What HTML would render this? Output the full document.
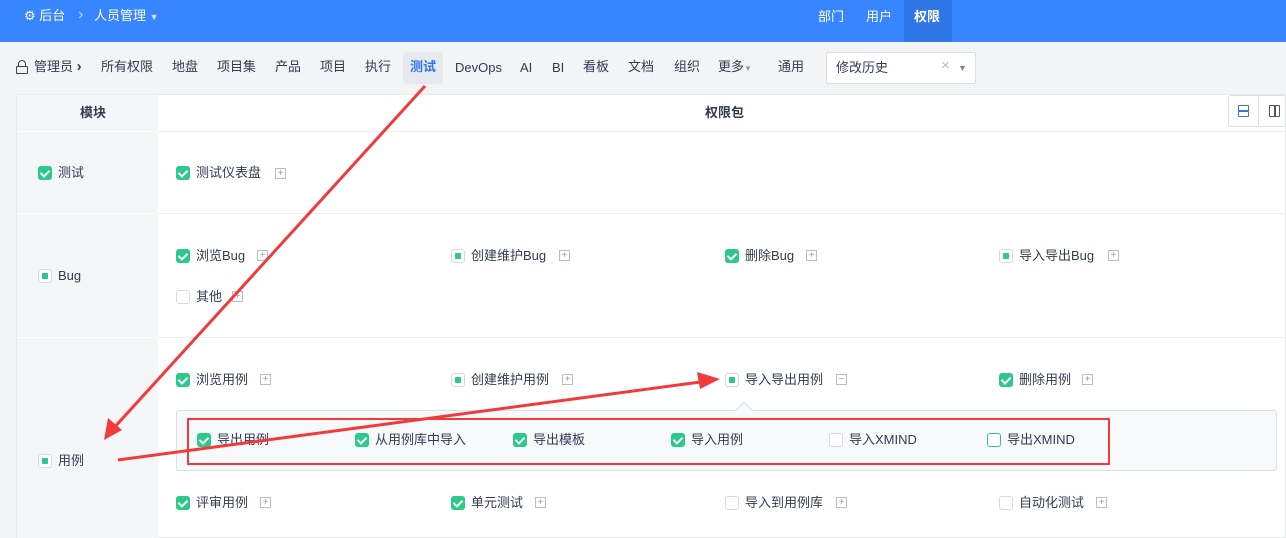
<!DOCTYPE html>
<html><head><meta charset="utf-8"><style>
*{margin:0;padding:0;box-sizing:border-box}
body{width:1286px;height:538px;overflow:hidden;background:#f3f4f6;font-family:"Liberation Sans","Noto Sans CJK SC",sans-serif;font-size:13px;color:#313c52;position:relative}
.a{position:absolute;white-space:nowrap;line-height:16px}
.top{position:absolute;left:0;top:0;width:1286px;height:42px;background:#3785ff;color:#fff}
.cb{position:absolute;width:14px;height:14px;border-radius:3px;background:#2bc98a}
.cb:after{content:"";position:absolute;left:4px;top:1.5px;width:4px;height:7px;border:solid #fff;border-width:0 2px 2px 0;transform:rotate(45deg)}
.pb{position:absolute;width:14px;height:14px;border-radius:3px;border:1px solid #d5d9e0;background:#fff}
.pb:after{content:"";position:absolute;left:3px;top:3px;width:6px;height:6px;background:#2bc98a;border-radius:1px}
.eb{position:absolute;width:14px;height:14px;border-radius:3px;border:1px solid #d5d9e0;background:#fff}
.pl{position:absolute;width:11px;height:11px;border:1px solid #b8bdc8;color:#9aa0ab;font-size:10px;line-height:9px;text-align:center}
.t{position:absolute;white-space:nowrap;line-height:16px}
</style></head><body>
<div class="top">
 <span class="a" style="left:24px;top:8px">⚙ 后台</span>
 <span class="a" style="left:78px;top:7px;color:#b7d2ff;font-size:16px">›</span>
 <span class="a" style="left:94px;top:8px">人员管理 <span style="font-size:9px;color:#cfe0ff">▼</span></span>
 <span class="a" style="left:818px;top:9px">部门</span>
 <span class="a" style="left:866px;top:9px">用户</span>
 <div class="a" style="left:904px;top:0;width:48px;height:42px;background:#2f76e6"></div>
 <span class="a" style="left:914px;top:9px;font-weight:bold">权限</span>
</div>
<div class="a" style="left:16px;top:60px;width:12px;height:14px">
 <div style="position:absolute;left:2px;top:0;width:8px;height:8px;border:1.5px solid #444;border-radius:4px 4px 0 0"></div>
 <div style="position:absolute;left:0;top:6px;width:12px;height:8px;border:1.5px solid #444;background:#f3f4f6;border-radius:1px"></div>
</div>
<span class="a" style="left:34px;top:59px">管理员 <b style="font-size:15px">›</b></span>
<span class="a" style="left:101px;top:59px">所有权限</span>
<span class="a" style="left:172px;top:59px">地盘</span>
<span class="a" style="left:217px;top:59px">项目集</span>
<span class="a" style="left:275px;top:59px">产品</span>
<span class="a" style="left:320px;top:59px">项目</span>
<span class="a" style="left:365px;top:59px">执行</span>
<div class="a" style="left:403px;top:52px;width:40px;height:32px;background:#e6e9f0;border-radius:4px"></div>
<span class="a" style="left:410px;top:59px;color:#2f76e6;font-weight:bold">测试</span>
<span class="a" style="left:455px;top:60px">DevOps</span>
<span class="a" style="left:520px;top:60px">AI</span>
<span class="a" style="left:552px;top:60px">BI</span>
<span class="a" style="left:583px;top:59px">看板</span>
<span class="a" style="left:628px;top:59px">文档</span>
<span class="a" style="left:674px;top:59px">组织</span>
<span class="a" style="left:718px;top:59px">更多<span style="font-size:8px;color:#999">▼</span></span>
<span class="a" style="left:778px;top:59px">通用</span>
<div class="a" style="left:826px;top:52px;width:150px;height:32px;background:#fff;border:1px solid #dcdfe5;border-radius:2px"></div>
<span class="a" style="left:836px;top:60px">修改历史</span>
<span class="a" style="left:941px;top:58px;color:#bbb;font-size:15px">×</span>
<span class="a" style="left:958px;top:60px;font-size:9px;color:#888">▼</span>
<div class="a" style="left:16px;top:94px;width:1270px;height:444px;background:#fff;border:1px solid #e8eaee"></div>
<div class="a" style="left:17px;top:95px;width:141px;height:443px;background:#f5f6f8"></div>
<div class="a" style="left:17px;top:131px;width:1269px;height:1px;background:#eceef2"></div>
<div class="a" style="left:17px;top:213px;width:1269px;height:1px;background:#eceef2"></div>
<div class="a" style="left:17px;top:337px;width:1269px;height:1px;background:#eceef2"></div>
<div class="a" style="left:17px;top:131px;width:141px;height:1px;background:#fff"></div>
<div class="a" style="left:17px;top:213px;width:141px;height:1px;background:#fff"></div>
<div class="a" style="left:17px;top:337px;width:141px;height:1px;background:#fff"></div>
<b class="a" style="left:80px;top:105px">模块</b>
<b class="a" style="left:705px;top:105px">权限包</b>
<div class="a" style="left:1228px;top:95px;width:58px;height:32px;border:1px solid #dcdfe5;border-radius:3px;background:#fff"></div>
<div class="a" style="left:1258px;top:95px;width:1px;height:32px;background:#dcdfe5"></div>
<div class="a" style="left:1238px;top:105px;width:11px;height:12px;border:1.5px solid #2f76e6;border-radius:1px"></div>
<div class="a" style="left:1238px;top:110px;width:11px;height:1.5px;background:#2f76e6"></div>
<div class="a" style="left:1269px;top:105px;width:11px;height:12px;border:1.5px solid #555;border-radius:1px"></div>
<div class="a" style="left:1274px;top:105px;width:1.5px;height:12px;background:#555"></div>
<div class="cb" style="left:38px;top:166px"></div><span class="t" style="left:58px;top:165px">测试</span>
<div class="pb" style="left:38px;top:269px"></div><span class="t" style="left:58px;top:268px">Bug</span>
<div class="pb" style="left:38px;top:454px"></div><span class="t" style="left:58px;top:453px">用例</span>
<div class="cb" style="left:176px;top:166px"></div><span class="t" style="left:196px;top:165px">测试仪表盘</span><div class="pl" style="left:275px;top:168px">+</div>
<div class="cb" style="left:176px;top:249px"></div><span class="t" style="left:196px;top:248px">浏览Bug</span><div class="pl" style="left:257px;top:250px">+</div>
<div class="pb" style="left:451px;top:249px"></div><span class="t" style="left:471px;top:248px">创建维护Bug</span><div class="pl" style="left:559px;top:250px">+</div>
<div class="cb" style="left:725px;top:249px"></div><span class="t" style="left:745px;top:248px">删除Bug</span><div class="pl" style="left:806px;top:250px">+</div>
<div class="pb" style="left:999px;top:249px"></div><span class="t" style="left:1019px;top:248px">导入导出Bug</span><div class="pl" style="left:1108px;top:250px">+</div>
<div class="eb" style="left:176px;top:290px"></div><span class="t" style="left:196px;top:289px">其他</span><div class="pl" style="left:232px;top:291px">+</div>
<div class="cb" style="left:176px;top:373px"></div><span class="t" style="left:196px;top:372px">浏览用例</span><div class="pl" style="left:260px;top:374px">+</div>
<div class="pb" style="left:451px;top:373px"></div><span class="t" style="left:471px;top:372px">创建维护用例</span><div class="pl" style="left:562px;top:374px">+</div>
<div class="pb" style="left:725px;top:373px"></div><span class="t" style="left:745px;top:372px">导入导出用例</span><div class="pl" style="left:836px;top:374px">−</div>
<div class="cb" style="left:999px;top:373px"></div><span class="t" style="left:1019px;top:372px">删除用例</span><div class="pl" style="left:1082px;top:374px">+</div>
<div class="a" style="left:176px;top:410px;width:1101px;height:61px;background:#f8f9fb;border:1px solid #dcdfe5;border-radius:3px"></div>
<div class="a" style="left:738px;top:404px;width:12px;height:12px;background:#f8f9fb;border-left:1px solid #dcdfe5;border-top:1px solid #dcdfe5;transform:rotate(45deg)"></div>
<div class="cb" style="left:197px;top:433px"></div><span class="t" style="left:217px;top:432px">导出用例</span>
<div class="cb" style="left:355px;top:433px"></div><span class="t" style="left:375px;top:432px">从用例库中导入</span>
<div class="cb" style="left:513px;top:433px"></div><span class="t" style="left:533px;top:432px">导出模板</span>
<div class="cb" style="left:671px;top:433px"></div><span class="t" style="left:691px;top:432px">导入用例</span>
<div class="eb" style="left:829px;top:433px"></div><span class="t" style="left:849px;top:432px">导入XMIND</span>
<div class="eb" style="left:987px;top:433px;border-color:#2bc98a"></div><span class="t" style="left:1007px;top:432px">导出XMIND</span>
<div class="cb" style="left:176px;top:496px"></div><span class="t" style="left:196px;top:495px">评审用例</span><div class="pl" style="left:260px;top:497px">+</div>
<div class="cb" style="left:451px;top:496px"></div><span class="t" style="left:471px;top:495px">单元测试</span><div class="pl" style="left:535px;top:497px">+</div>
<div class="eb" style="left:725px;top:496px"></div><span class="t" style="left:745px;top:495px">导入到用例库</span><div class="pl" style="left:836px;top:497px">+</div>
<div class="eb" style="left:999px;top:496px"></div><span class="t" style="left:1019px;top:495px">自动化测试</span><div class="pl" style="left:1096px;top:497px">+</div>
<div class="a" style="left:187px;top:418px;width:923px;height:47px;border:2.5px solid #f33a3a"></div>
<svg class="a" style="left:0;top:0" width="1286" height="538">
 <line x1="425" y1="86" x2="112" y2="430" stroke="#f33a3a" stroke-width="3"/>
 <polygon points="104,440 108,418 122,430" fill="#f33a3a"/>
 <line x1="118" y1="460" x2="708" y2="381" stroke="#f33a3a" stroke-width="3"/>
 <polygon points="720,379 697,372 700,389" fill="#f33a3a"/>
</svg>
</body></html>
